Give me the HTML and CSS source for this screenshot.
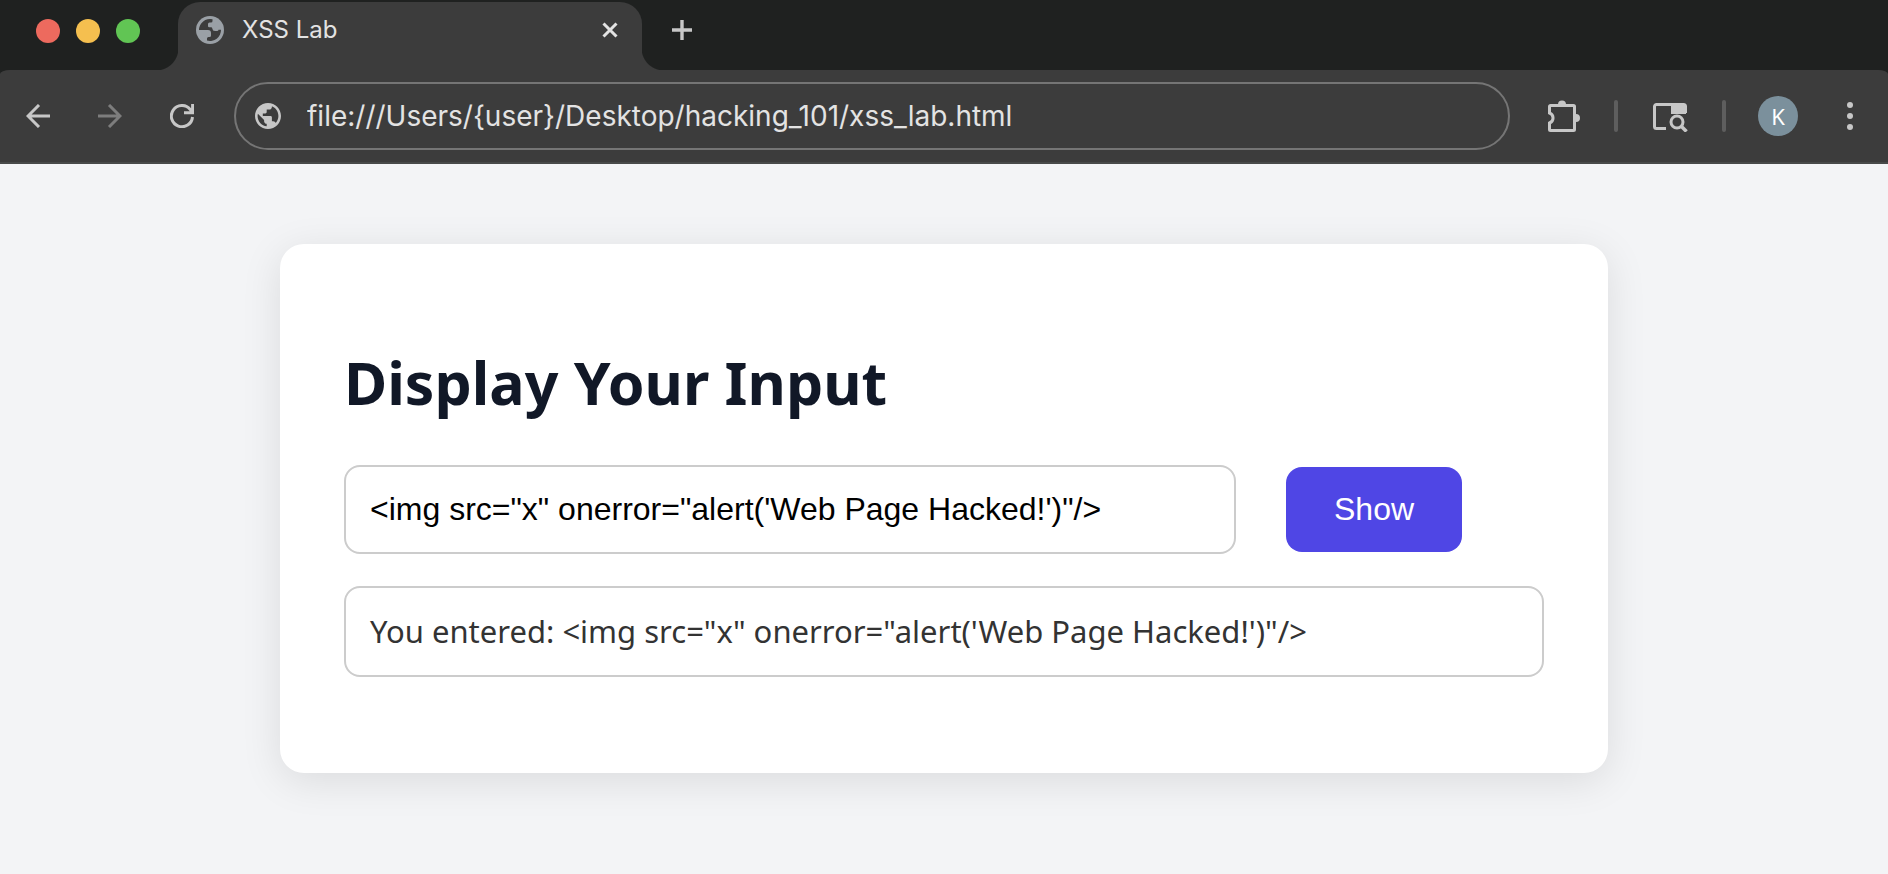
FILE: index.html
```html
<!DOCTYPE html>
<html lang="en">
<head>
<meta charset="utf-8">
<title>XSS Lab</title>
<link rel="stylesheet" href="styles.css">
</head>
<body>
<header class="browser">
  <div class="tabstrip">
    <div class="lights">
      <span class="light light-close"></span>
      <span class="light light-min"></span>
      <span class="light light-max"></span>
    </div>
    <div class="tab">
      <svg class="favicon" viewBox="0 0 28 28" aria-hidden="true">
        <circle cx="14" cy="14" r="14" fill="#9aa0a6"/>
        <path fill="#3c3c3c" d="M3 14A11 11 0 0 1 16.500 3.300V5q0 1.500-1.500 1.500h-1.500q-1.500 0-1.500 1.500v2q0 1.200 1.200 1.200H15q1.200 0 1.300 1.300.2 2.500 2.700 2.500h2q1.500 0 1.500-1.200h2.500A11 11 0 0 1 11 24.600v-2.100q0-1.500 1.500-1.500h1q1.500 0 1.500-1.500V17q0-3-3-3z"/>
      </svg>
      <span class="tab-title">XSS Lab</span>
      <button class="icon-btn" type="button" aria-label="Close tab">
        <svg width="16" height="16" viewBox="0 0 16 16"><path d="M1.500 1.500l13 13M14.500 1.500l-13 13" stroke="#e3e3e3" stroke-width="3" fill="none"/></svg>
      </button>
    </div>
    <button class="icon-btn new-tab" type="button" aria-label="New tab">
      <svg width="20" height="20" viewBox="0 0 20 20"><path d="M10 0v20M0 10h20" stroke="#c7c7c7" stroke-width="3.400" fill="none"/></svg>
    </button>
  </div>
  <div class="toolbar">
    <nav class="nav">
      <button class="icon-btn" type="button" aria-label="Back">
        <svg width="24" height="24" viewBox="0 0 24 24"><path d="M24 12H2M13 1L2 12l11 11" stroke="#c7c7c7" stroke-width="3" fill="none"/></svg>
      </button>
      <button class="icon-btn" type="button" aria-label="Forward" disabled>
        <svg width="24" height="24" viewBox="0 0 24 24"><path d="M0 12h22M11 1l11 11-11 11" stroke="#7d7d7d" stroke-width="3" fill="none"/></svg>
      </button>
      <button class="icon-btn" type="button" aria-label="Reload">
        <svg width="24" height="24" viewBox="0 0 24 24"><path d="M22.500 13A10.600 10.600 0 1 1 20 5.200L22 8M22.600 0v8.700H14" stroke="#c7c7c7" stroke-width="3" fill="none"/></svg>
      </button>
    </nav>
    <label class="omnibox">
      <svg class="site-icon" viewBox="2 2 20 20" aria-hidden="true"><path fill="#c7c7c7" d="M12 2C6.480 2 2 6.480 2 12s4.480 10 10 10 10-4.480 10-10S17.520 2 12 2zm-1 17.930c-3.950-.49-7-3.850-7-7.930 0-.62.08-1.210.21-1.790L9 15v1c0 1.100.9 2 2 2v1.930zm6.900-2.540c-.26-.81-1-1.390-1.900-1.390h-1v-3c0-.55-.45-1-1-1H8v-2h2c.55 0 1-.45 1-1V7h2c1.100 0 2-.9 2-2v-.41c2.930 1.190 5 4.060 5 7.410 0 2.080-.8 3.970-2.100 5.390z"/></svg>
      <input class="url" type="text" aria-label="Address" value="file:///Users/{user}/Desktop/hacking_101/xss_lab.html">
    </label>
    <div class="actions">
      <button class="icon-btn" type="button" aria-label="Extensions">
        <svg width="32" height="32" viewBox="0 0 32 32"><path d="M2.500 5.500h23a1 1 0 0 1 1 1v23a1 1 0 0 1-1 1h-23a1 1 0 0 1-1-1v-6.500a5.300 5.300 0 0 0 0-10V6.500a1 1 0 0 1 1-1z" fill="none" stroke="#c7c7c7" stroke-width="3"/><path d="M10 4.500a4 4 0 0 1 8 0zM28 14a4 4 0 0 1 0 8z" fill="#c7c7c7"/></svg>
      </button>
      <span class="divider"></span>
      <button class="icon-btn" type="button" aria-label="Search side panel">
        <svg width="36" height="32" viewBox="0 0 36 32"><path d="M14 28.500H4.500a2 2 0 0 1-2-2v-20a2 2 0 0 1 2-2h27a2 2 0 0 1 2 2V13" fill="none" stroke="#c7c7c7" stroke-width="3"/><path d="M19 4h15v10H19z" fill="#c7c7c7"/><circle cx="25" cy="22" r="6" fill="#3c3c3c" stroke="#c7c7c7" stroke-width="3"/><path d="M29 26l5.500 5.500" stroke="#c7c7c7" stroke-width="3.500"/></svg>
      </button>
      <span class="divider"></span>
      <button class="avatar" type="button" aria-label="Profile K">K</button>
      <button class="icon-btn menu" type="button" aria-label="Menu">
        <svg width="6" height="28" viewBox="0 0 6 28" fill="#c7c7c7"><circle cx="3" cy="3" r="3"/><circle cx="3" cy="14" r="3"/><circle cx="3" cy="25" r="3"/></svg>
      </button>
    </div>
  </div>
</header>
<main class="page">
  <section class="card">
    <h1 class="heading">Display Your Input</h1>
    <form class="entry">
      <input class="field" type="text" aria-label="Your input" value="&lt;img src=&quot;x&quot; onerror=&quot;alert('Web Page Hacked!')&quot;/&gt;">
      <button class="show" type="button">Show</button>
    </form>
    <output class="result">You entered: &lt;img src="x" onerror="alert('Web Page Hacked!')"/&gt;</output>
  </section>
</main>
</body>
</html>
```

FILE: styles.css
```css
* {
  box-sizing: border-box;
}

body {
  margin: 0;
  min-height: 100vh;
  background: #f3f4f6;
  font-family: "Noto Sans", sans-serif;
}

button,
input {
  margin: 0;
  padding: 0;
  border: 0;
  background: none;
  outline: 0;
}

svg {
  display: block;
}

.browser {
  background: #1f2120;
  font-family: Inter, sans-serif;
}

.tabstrip {
  display: flex;
  height: 70px;
  padding: 2px 36px 0;
}

.lights {
  display: flex;
  gap: 16px;
  padding-top: 17px;
}

.light {
  width: 24px;
  height: 24px;
  border-radius: 50%;
}

.light-close { background: #ed6a5e; }
.light-min { background: #f5bf4f; }
.light-max { background: #61c554; }

.icon-btn {
  display: flex;
  align-items: center;
  justify-content: center;
}

.tab {
  position: relative;
  display: flex;
  align-items: center;
  width: 464px;
  margin-left: 38px;
  padding: 0 24px 12px 18px;
  border-radius: 22px 22px 0 0;
  background: #3c3c3c;
}

.tab::before,
.tab::after {
  content: "";
  position: absolute;
  bottom: 0;
  width: 22px;
  height: 22px;
}

.tab::before {
  right: 100%;
  background: radial-gradient(circle at 0 0, transparent 22px, #3c3c3c 23px);
}

.tab::after {
  left: 100%;
  background: radial-gradient(circle at 100% 0, transparent 22px, #3c3c3c 23px);
}

.favicon {
  width: 28px;
  height: 28px;
}

.tab-title {
  flex: 1;
  margin-left: 18px;
  color: #e3e3e3;
  font-size: 24px;
  line-height: 32px;
}

.new-tab {
  margin: 0 0 12px 30px;
}

.toolbar {
  display: flex;
  align-items: center;
  height: 94px;
  padding: 0 35px 0 26px;
  border-bottom: 2px solid #484a49;
  border-radius: 10px 10px 0 0 / 4px 4px 0 0;
  background: #3c3c3c;
}

.nav {
  display: flex;
  gap: 48px;
}

.omnibox {
  display: flex;
  flex: 1;
  align-items: center;
  height: 68px;
  margin: 0 38px 0 40px;
  padding: 0 19px;
  border: 2px solid #757575;
  border-radius: 34px;
}

.site-icon {
  flex: none;
  width: 26px;
  height: 26px;
}

.url {
  flex: 1;
  min-width: 0;
  margin-left: 26px;
  color: #e3e3e3;
  font-family: Inter, sans-serif;
  font-size: 28px;
}

.actions {
  display: flex;
  align-items: center;
}

.divider {
  width: 4px;
  height: 32px;
  margin: 0 34px;
  border-radius: 2px;
  background: #5e5e5e;
}

.divider + .avatar {
  margin-left: -2px;
}

.avatar {
  width: 40px;
  height: 40px;
  margin-right: 49px;
  border-radius: 50%;
  background: #7b909c;
  color: #fff;
  font-family: "Noto Sans", sans-serif;
  font-size: 22px;
}

.page {
  padding: 80px 24px;
}

.card {
  max-width: 1328px;
  margin: 0 auto;
  padding: 96px 64px;
  border-radius: 24px;
  background: #fff;
  box-shadow: 0 8px 40px rgba(0, 0, 0, 0.1);
}

.heading {
  margin: 0 0 40px;
  color: #111827;
  font-size: 59px;
  line-height: 85px;
}

.entry {
  display: flex;
  align-items: center;
  gap: 50px;
  margin-bottom: 32px;
}

.field {
  flex: 0 1 892px;
  min-width: 0;
  padding: 24px;
  border: 2px solid #ccc;
  border-radius: 16px;
  color: #000;
  font-family: "Liberation Sans", Arial, sans-serif;
  font-size: 32px;
}

.show {
  padding: 24px 48px;
  border-radius: 16px;
  background: #4f46e5;
  color: #fff;
  font-family: "Liberation Sans", Arial, sans-serif;
  font-size: 32px;
}

.result {
  display: block;
  padding: 24px;
  border: 2px solid #ccc;
  border-radius: 16px;
  color: #333;
  font-size: 31px;
  line-height: 39px;
}
```
